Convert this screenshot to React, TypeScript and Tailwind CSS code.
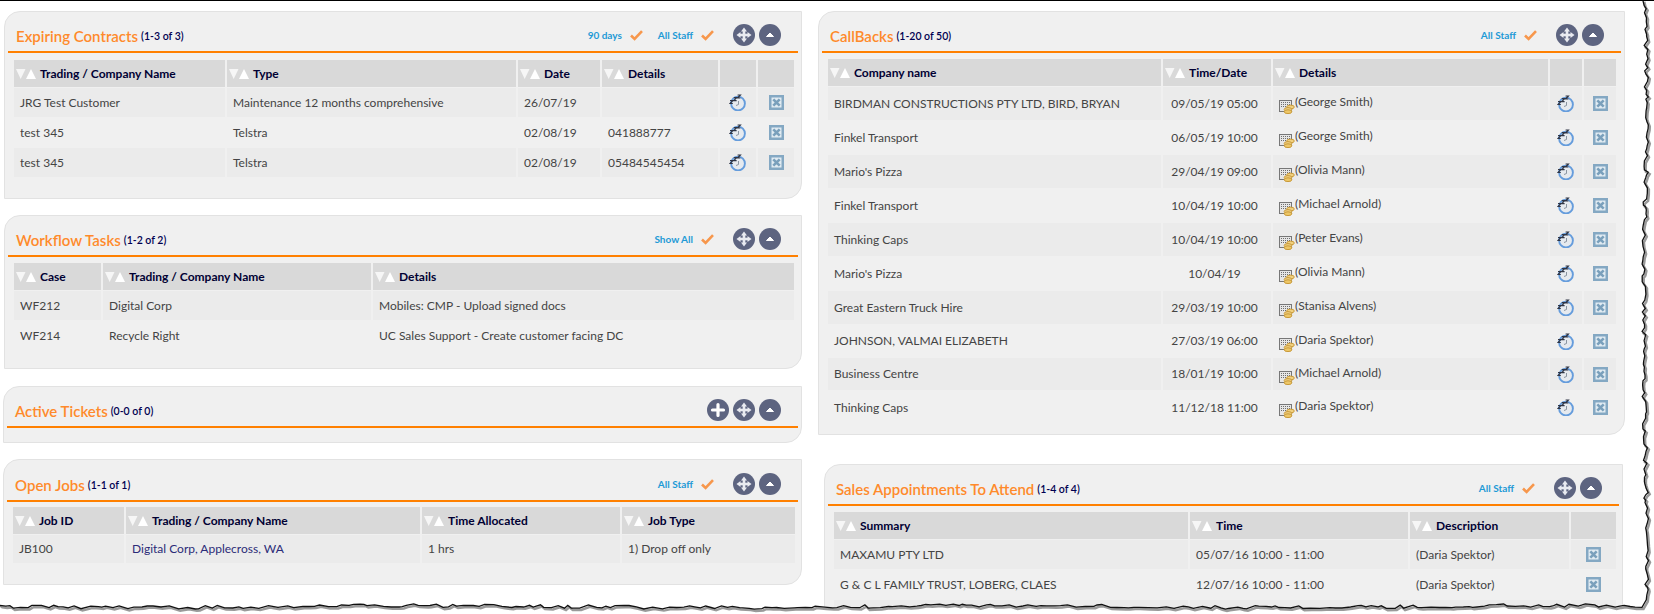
import type { ReactNode } from "react";

// torn screenshot edge, seeded so that every run draws the same line
function tornEdge() {
  let seed = 7;
  const rnd = () => {
    seed = (seed * 16807) % 2147483647;
    return seed / 2147483647;
  };
  const pts: string[] = [];
  let y = 0;
  while (y < 603) {
    const x = 1645 + Math.sin(y / 70) * 1.5 + (rnd() - 0.5) * 4.5;
    pts.push(`${x.toFixed(1)},${y.toFixed(1)}`);
    y += 2 + rnd() * 4;
  }
  let x = 1642;
  while (x > 0) {
    const py = 606.5 + Math.sin(x / 90) * 1 + (rnd() - 0.5) * 3.6;
    pts.push(`${x.toFixed(1)},${py.toFixed(1)}`);
    x -= 3 + rnd() * 7;
  }
  pts.push("0,606.5");
  return pts;
}

const edge = tornEdge();
const edgeLine = `M${edge.join(" L")}`;
const edgeFill = `${edgeLine} L0,614 L1654,614 L1654,0 Z`;

function SortArrows() {
  return (
    <svg width="20" height="10" viewBox="0 0 20 10" className="shrink-0">
      <path d="M0 0H9.5L4.7 10Z" fill="#f6f6f6" />
      <path d="M10 10H20L15 0Z" fill="#ffffff" />
    </svg>
  );
}

function Check() {
  return (
    <svg width="13" height="11" viewBox="0 0 13 11" className="shrink-0">
      <path d="M1 5.5L4.6 9L12 1.2" fill="none" stroke="#f7974c" strokeWidth="2.6" />
    </svg>
  );
}

function RoundButton({ kind }: { kind: "plus" | "move" | "up" }) {
  return (
    <div className="w-[22px] h-[22px] rounded-full bg-[#5d6480] flex items-center justify-center shrink-0">
      <svg width="22" height="22" viewBox="0 0 22 22">
        {kind === "plus" && <path d="M11 5.5V16.5M5.5 11H16.5" stroke="#fff" strokeWidth="3.2" strokeLinecap="round" />}
        {kind === "up" && <path d="M7.5 12.5L11 9L14.5 12.5Z" fill="#fff" stroke="#fff" strokeWidth="1" strokeLinejoin="round" />}
        {kind === "move" && (
          <g fill="#e8eaf0">
            <path d="M9.7 7H12.3V15H9.7Z" />
            <path d="M7 9.7H15V12.3H7Z" />
            <path d="M11 3.5L14 7.5H8Z" />
            <path d="M11 18.5L14 14.5H8Z" />
            <path d="M3.5 11L7.5 8V14Z" />
            <path d="M18.5 11L14.5 8V14Z" />
          </g>
        )}
      </svg>
    </div>
  );
}

function SnoozeIcon() {
  return (
    <svg width="17" height="17" viewBox="0 0 17 17" className="-ml-[2px]">
      <circle cx="9" cy="9.5" r="6.9" fill="#e6eaef" stroke="#659cdc" strokeWidth="1.9" />
      <path d="M9.5 7V10.5L7 11.5" fill="none" stroke="#8a94a0" strokeWidth="1" />
      <path
        d="M1 6.5H3.8L1 9.5H3.8M4.8 3.6H7.6L4.8 6.6H7.6M8.6 1H11.4L8.6 4H11.4"
        fill="none"
        stroke="#2f3545"
        strokeWidth="1.2"
      />
    </svg>
  );
}

function DeleteIcon() {
  return (
    <svg width="15" height="15" viewBox="0 0 15 15">
      <rect x="1.25" y="1.25" width="12.5" height="12.5" fill="#e1ebf2" stroke="#84a8c3" strokeWidth="2.5" />
      <path d="M4.3 4.3L10.7 10.7M10.7 4.3L4.3 10.7" stroke="#7aa0bc" strokeWidth="2.6" />
    </svg>
  );
}

function BillIcon() {
  return (
    <svg width="16" height="16" viewBox="0 0 16 16" className="shrink-0">
      <rect x="0.5" y="2.5" width="12" height="11" fill="#e6e6e6" stroke="#777777" />
      <path d="M2 4.5H11M2 6.5H11M2 8.5H7" stroke="#6e6e6e" strokeDasharray="1 1" />
      <ellipse cx="11.5" cy="9" rx="3.8" ry="1.9" fill="#f0d080" stroke="#c99a3a" />
      <ellipse cx="9" cy="11.5" rx="3.8" ry="1.9" fill="#f0d080" stroke="#c99a3a" />
      <ellipse cx="9" cy="13.7" rx="3.8" ry="1.9" fill="#edc768" stroke="#c99a3a" />
    </svg>
  );
}

function Person({ name }: { name: string }) {
  return (
    <div className="w-full h-full flex items-start pl-[6px] pt-[7px]">
      <span className="mt-[4px]"><BillIcon /></span>
      <span className="-mt-[1px]">({name})</span>
    </div>
  );
}

function Centered({ text }: { text: string }) {
  return <span className="pr-[5px]">{text}</span>;
}

function Link({ text }: { text: string }) {
  return <span className="text-[#2b2b78] pl-[6px]">{text}</span>;
}

type Cell = ReactNode;

type GridProps = {
  cols: string;
  headers: string[];
  rows: Cell[][];
  rowH: string;
  mt: string;
  shortRows?: number[];
};

function DataGrid({ cols, headers, rows, rowH, mt, shortRows = [] }: GridProps) {
  return (
    <div className={`ml-[6px] flex flex-col gap-y-px ${mt}`}>
      <div className={`grid gap-x-[2px] h-[27px] ${cols}`}>
        {headers.map((h, i) => (
          <div key={i} className="bg-[#d9d9d9] flex items-center pl-[2px] text-[12px] font-bold text-[#000033]">
            {h && <SortArrows />}
            {h && <span className="ml-[4px]">{h}</span>}
          </div>
        ))}
      </div>
      {rows.map((row, r) => (
        <div key={r} className={`grid gap-x-[2px] ${cols} ${shortRows.includes(r) ? "h-[32px]" : rowH}`}>
          {row.map((c, i) => (
            <div
              key={i}
              className={`flex items-center text-[12px] text-[#444444] ${r % 2 === 0 ? "bg-[#ebebeb]" : "bg-[#f0f0f0]"} ${
                typeof c === "string" ? "pl-[6px]" : "justify-center"
              }`}
            >
              {c}
            </div>
          ))}
        </div>
      ))}
    </div>
  );
}

type PanelProps = {
  title: string;
  count: string;
  filters?: string[];
  plus?: boolean;
  box: string;
  headerTop?: string;
  children?: ReactNode;
};

function Panel({ title, count, filters = [], plus, box, headerTop = "pt-[12px] h-[41px]", children }: PanelProps) {
  return (
    <section className={`bg-[#f0f0f0] border border-[#e2e2e2] rounded-tl-[16px] rounded-br-[16px] px-[3px] ${box}`}>
      <header className={`flex items-center border-b-2 border-[#ff8000] pb-[5px] pl-[8px] pr-[17px] ${headerTop}`}>
        <h2 className="mt-[2px] text-[15px] leading-[20px] font-semibold text-[#ff8a2b]">{title}</h2>
        <span className="mt-[2px] ml-[3px] text-[10.5px] leading-[20px] font-semibold text-[#000050]">{count}</span>
        <div className="ml-auto flex items-center">
          {filters.length > 0 && (
            <div className="flex items-center gap-x-[15px] mr-[19px]">
              {filters.map((f) => (
                <div key={f} className="flex items-center gap-x-[8px] text-[10px] font-bold text-[#1e9ad6]">
                  <span>{f}</span>
                  <Check />
                </div>
              ))}
            </div>
          )}
          <div className="flex items-center gap-x-[4px]">
            {plus && <RoundButton kind="plus" />}
            <RoundButton kind="move" />
            <RoundButton kind="up" />
          </div>
        </div>
      </header>
      {children}
    </section>
  );
}

const contracts: Cell[][] = [
  ["JRG Test Customer", "Maintenance 12 months comprehensive", "26/07/19", "", <SnoozeIcon />, <DeleteIcon />],
  ["test 345", "Telstra", "02/08/19", "041888777", <SnoozeIcon />, <DeleteIcon />],
  ["test 345", "Telstra", "02/08/19", "05484545454", <SnoozeIcon />, <DeleteIcon />],
];

const tasks: Cell[][] = [
  ["WF212", "Digital Corp", "Mobiles: CMP - Upload signed docs"],
  ["WF214", "Recycle Right", "UC Sales Support - Create customer facing DC"],
];

const callbackData = [
  ["BIRDMAN CONSTRUCTIONS PTY LTD, BIRD, BRYAN", "09/05/19 05:00", "George Smith"],
  ["Finkel Transport", "06/05/19 10:00", "George Smith"],
  ["Mario's Pizza", "29/04/19 09:00", "Olivia Mann"],
  ["Finkel Transport", "10/04/19 10:00", "Michael Arnold"],
  ["Thinking Caps", "10/04/19 10:00", "Peter Evans"],
  ["Mario's Pizza", "10/04/19", "Olivia Mann"],
  ["Great Eastern Truck Hire", "29/03/19 10:00", "Stanisa Alvens"],
  ["JOHNSON, VALMAI ELIZABETH", "27/03/19 06:00", "Daria Spektor"],
  ["Business Centre", "18/01/19 10:00", "Michael Arnold"],
  ["Thinking Caps", "11/12/18 11:00", "Daria Spektor"],
];

const callbacks: Cell[][] = callbackData.map(([company, time, person]) => [
  company,
  <Centered text={time} />,
  <Person name={person} />,
  <SnoozeIcon />,
  <DeleteIcon />,
]);

const appointments: Cell[][] = [
  ["MAXAMU PTY LTD", "05/07/16 10:00 - 11:00", "(Daria Spektor)", <DeleteIcon />],
  ["G & C L FAMILY TRUST, LOBERG, CLAES", "12/07/16 10:00 - 11:00", "(Daria Spektor)", <DeleteIcon />],
  ["", "", "", ""],
];

export default function App() {
  return (
    <div className="relative w-[1654px] h-[614px] overflow-hidden bg-white font-[Lato,sans-serif] border-t border-black">
      <div className="flex items-start">
        <div className="flex flex-col w-[818px] pt-[10px]">
          <Panel
            title="Expiring Contracts"
            count="(1-3 of 3)"
            filters={["90 days", "All Staff"]}
            box="ml-[4px] w-[798px] h-[188px]"
          >
            <DataGrid
              cols="grid-cols-[211px_289px_82px_116px_36px_36px]"
              headers={["Trading / Company Name", "Type", "Date", "Details", "", ""]}
              rows={contracts}
              rowH="h-[29px]"
              mt="mt-[7px]"
            />
          </Panel>
          <Panel title="Workflow Tasks" count="(1-2 of 2)" filters={["Show All"]} box="ml-[4px] mt-[16px] w-[798px] h-[154px]">
            <DataGrid
              cols="grid-cols-[87px_268px_421px]"
              headers={["Case", "Trading / Company Name", "Details"]}
              rows={tasks}
              rowH="h-[29px]"
              mt="mt-[6px]"
            />
          </Panel>
          <Panel title="Active Tickets" count="(0-0 of 0)" plus box="ml-[3px] mt-[17px] w-[799px] h-[57px]" />
          <Panel
            title="Open Jobs"
            count="(1-1 of 1)"
            filters={["All Staff"]}
            headerTop="pt-[13px] h-[42px]"
            box="ml-[3px] mt-[16px] w-[799px] h-[126px]"
          >
            <DataGrid
              cols="grid-cols-[111px_294px_198px_173px]"
              headers={["Job ID", "Trading / Company Name", "Time Allocated", "Job Type"]}
              rows={[[
                "JB100",
                <div className="w-full"><Link text="Digital Corp, Applecross, WA" /></div>,
                "1 hrs",
                "1) Drop off only",
              ]]}
              rowH="h-[28px]"
              mt="mt-[5px]"
            />
          </Panel>
        </div>
        <div className="flex flex-col w-[830px] pt-[10px]">
          <Panel title="CallBacks" count="(1-20 of 50)" filters={["All Staff"]} box="w-[807px] h-[424px]">
            <DataGrid
              cols="grid-cols-[333px_108px_275px_32px_32px]"
              headers={["Company name", "Time/Date", "Details", "", ""]}
              rows={callbacks}
              rowH="h-[33px]"
              mt="mt-[6px]"
              shortRows={[7, 8]}
            />
          </Panel>
          <Panel
            title="Sales Appointments To Attend"
            count="(1-4 of 4)"
            filters={["All Staff"]}
            box="ml-[6px] mt-[29px] w-[799px] h-[200px]"
          >
            <DataGrid
              cols="grid-cols-[354px_218px_159px_45px]"
              headers={["Summary", "Time", "Description", ""]}
              rows={appointments}
              rowH="h-[29px]"
              mt="mt-[6px]"
            />
          </Panel>
        </div>
      </div>
      <svg width="1654" height="614" viewBox="0 0 1654 614" className="absolute left-0 -top-px pointer-events-none">
        <path d={edgeFill} fill="#ffffff" />
        <path d={edgeLine} fill="none" stroke="#9a9a9a" strokeWidth="2.5" transform="translate(1.5 1.8)" />
        <path d={edgeLine} fill="none" stroke="#111111" strokeWidth="1.3" />
      </svg>
    </div>
  );
}
